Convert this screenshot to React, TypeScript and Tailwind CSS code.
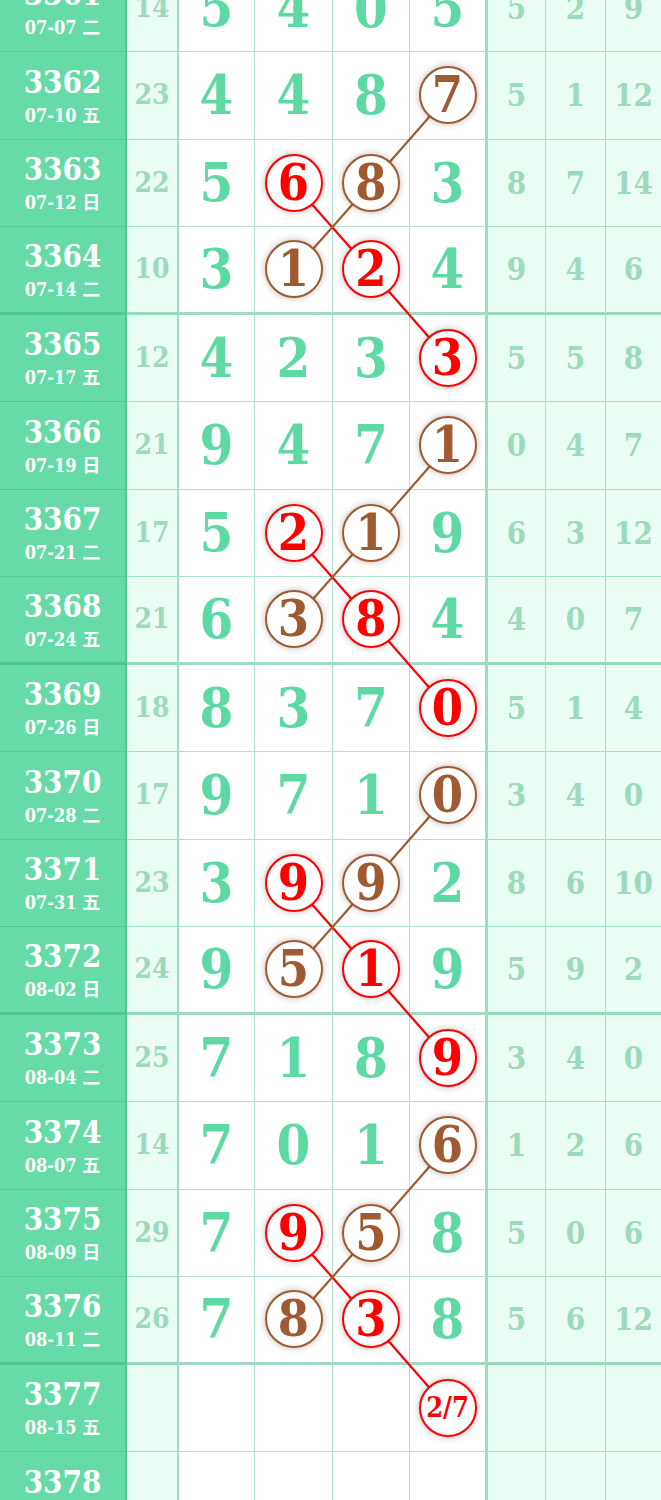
import React from "react";

type Row = {
  n: number;
  d: string;
  s: string;
  m: string[];
  c: Record<number, "r" | "b">;
  x: string[];
};

const rows: Row[] = [
  { n: 3361, d: "07-07 二", s: "14", m: ["5", "4", "0", "5"], c: {}, x: ["5", "2", "9"] },
  { n: 3362, d: "07-10 五", s: "23", m: ["4", "4", "8", "7"], c: { 3: "b" }, x: ["5", "1", "12"] },
  { n: 3363, d: "07-12 日", s: "22", m: ["5", "6", "8", "3"], c: { 1: "r", 2: "b" }, x: ["8", "7", "14"] },
  { n: 3364, d: "07-14 二", s: "10", m: ["3", "1", "2", "4"], c: { 1: "b", 2: "r" }, x: ["9", "4", "6"] },
  { n: 3365, d: "07-17 五", s: "12", m: ["4", "2", "3", "3"], c: { 3: "r" }, x: ["5", "5", "8"] },
  { n: 3366, d: "07-19 日", s: "21", m: ["9", "4", "7", "1"], c: { 3: "b" }, x: ["0", "4", "7"] },
  { n: 3367, d: "07-21 二", s: "17", m: ["5", "2", "1", "9"], c: { 1: "r", 2: "b" }, x: ["6", "3", "12"] },
  { n: 3368, d: "07-24 五", s: "21", m: ["6", "3", "8", "4"], c: { 1: "b", 2: "r" }, x: ["4", "0", "7"] },
  { n: 3369, d: "07-26 日", s: "18", m: ["8", "3", "7", "0"], c: { 3: "r" }, x: ["5", "1", "4"] },
  { n: 3370, d: "07-28 二", s: "17", m: ["9", "7", "1", "0"], c: { 3: "b" }, x: ["3", "4", "0"] },
  { n: 3371, d: "07-31 五", s: "23", m: ["3", "9", "9", "2"], c: { 1: "r", 2: "b" }, x: ["8", "6", "10"] },
  { n: 3372, d: "08-02 日", s: "24", m: ["9", "5", "1", "9"], c: { 1: "b", 2: "r" }, x: ["5", "9", "2"] },
  { n: 3373, d: "08-04 二", s: "25", m: ["7", "1", "8", "9"], c: { 3: "r" }, x: ["3", "4", "0"] },
  { n: 3374, d: "08-07 五", s: "14", m: ["7", "0", "1", "6"], c: { 3: "b" }, x: ["1", "2", "6"] },
  { n: 3375, d: "08-09 日", s: "29", m: ["7", "9", "5", "8"], c: { 1: "r", 2: "b" }, x: ["5", "0", "6"] },
  { n: 3376, d: "08-11 二", s: "26", m: ["7", "8", "3", "8"], c: { 1: "b", 2: "r" }, x: ["5", "6", "12"] },
  { n: 3377, d: "08-15 五", s: "", m: ["", "", "", "2/7"], c: { 3: "r" }, x: ["", "", ""] },
  { n: 3378, d: "08-17 日", s: "", m: ["", "", "", ""], c: {}, x: ["", "", ""] },
];

const ROW_H = 87.5;
const XC = [216.5, 293.5, 371, 447.5];

const font = "font-['DejaVu_Serif_Condensed','DejaVu_Serif',serif]";

function Circle({ v, color }: { v: string; color: "r" | "b" }) {
  const isRed = color === "r";
  const small = v.length > 1;
  return (
    <div
      className={`relative z-10 flex h-[58px] w-[58px] items-center justify-center rounded-full border-[2.5px] bg-white shadow-[0_0_7px_rgba(0,0,0,0.28)] ${
        isRed ? "border-[#ff0000] text-[#ff0000]" : "border-[#a05a32] text-[#a05a32]"
      } ${small ? "text-[27px]" : "text-[50px]"} font-bold leading-none`}
    >
      {v}
    </div>
  );
}

export default function App() {
  const segs: { x1: number; y1: number; x2: number; y2: number; col: string }[] = [];
  rows.forEach((r, i) => {
    const nxt = rows[i + 1];
    if (!nxt) return;
    Object.entries(r.c).forEach(([k, col]) => {
      const ci = Number(k);
      Object.entries(nxt.c).forEach(([k2, col2]) => {
        const cj = Number(k2);
        if (col2 === col && Math.abs(cj - ci) === 1) {
          segs.push({
            x1: XC[ci],
            y1: ROW_H * i + 43.5,
            x2: XC[cj],
            y2: ROW_H * (i + 1) + 43.5,
            col: col === "r" ? "#ff0000" : "#a05a32",
          });
        }
      });
    });
  });

  return (
    <div className={`w-[661px] overflow-hidden bg-white ${font}`}>
      <div className="relative mt-[-35.5px]">
        <svg
          className="pointer-events-none absolute left-0 top-0 z-[5]"
          width={661}
          height={ROW_H * rows.length}
        >
          {segs.map((s, i) => (
            <line key={i} x1={s.x1} y1={s.y1} x2={s.x2} y2={s.y2} stroke={s.col} strokeWidth={2.2} />
          ))}
        </svg>
        {rows.map((r) => {
          const thick = r.n % 4 === 0;
          const bb = thick
            ? "border-b-[3px] border-b-[rgba(50,175,120,0.45)]"
            : "border-b border-b-[rgba(50,185,125,0.4)]";
          return (
            <div key={r.n} className="flex h-[87.5px]">
              <div
                className={`flex w-[127px] shrink-0 flex-col items-center justify-center border-r-2 border-r-[rgba(40,170,110,0.35)] bg-[#66dba8] pt-[3px] text-white ${bb}`}
              >
                <div className="text-[31px] font-semibold leading-[32px]">{r.n}</div>
                <div className="mt-[6px] text-[18px] font-bold leading-[24px] font-['DejaVu_Serif_Condensed','DejaVu_Serif','Noto_Sans_CJK_SC',serif]">
                  {r.d}
                </div>
              </div>
              <div
                className={`flex w-[52px] shrink-0 items-center justify-center border-r-2 border-r-[rgba(50,180,120,0.4)] bg-[#e9fdf4] text-[28px] font-bold text-[#9cd9bd] ${bb}`}
              >
                {r.s}
              </div>
              {r.m.map((v, j) => {
                const w = ["w-[76px]", "w-[78px]", "w-[77px]", "w-[78px]"][j];
                const br =
                  j === 3
                    ? "border-r-[3px] border-r-[rgba(50,175,120,0.45)]"
                    : "border-r border-r-[rgba(50,185,125,0.4)]";
                const cc = r.c[j];
                return (
                  <div
                    key={j}
                    className={`flex ${w} shrink-0 items-center justify-center bg-white ${br} ${bb}`}
                  >
                    {cc ? (
                      <Circle v={v} color={cc} />
                    ) : (
                      <span className="text-[54px] font-bold leading-none text-[#5fd9a4]">{v}</span>
                    )}
                  </div>
                );
              })}
              {r.x.map((v, j) => {
                const w = ["w-[58px]", "w-[60px]", "flex-1"][j];
                const br = j < 2 ? "border-r border-r-[rgba(50,185,125,0.4)]" : "";
                return (
                  <div
                    key={j}
                    className={`flex ${w} shrink-0 items-center justify-center bg-[#e9fdf4] text-[31px] font-bold text-[#9cd9bd] ${br} ${bb}`}
                  >
                    {v}
                  </div>
                );
              })}
            </div>
          );
        })}
      </div>
    </div>
  );
}
